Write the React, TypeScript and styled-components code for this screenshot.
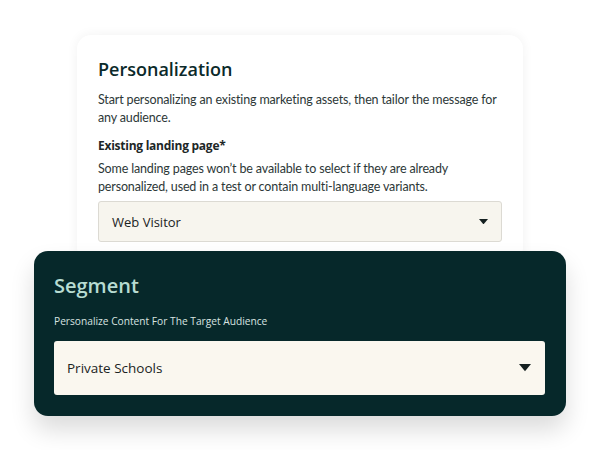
import React from "react";
import styled, { createGlobalStyle } from "styled-components";

const GlobalStyle = createGlobalStyle`
  body {
    margin: 0;
    background: #ffffff;
    font-family: "Open Sans", "Noto Sans", sans-serif;
  }
`;

const Page = styled.div`
  width: 600px;
  height: 450px;
  padding-top: 35px;
  box-sizing: border-box;
  display: flex;
  flex-direction: column;
  align-items: center;
`;

const Card = styled.div`
  width: 446px;
  box-sizing: border-box;
  padding: 22px 21px 20px;
  background: #ffffff;
  border-radius: 14px;
  box-shadow: 0 0 12px rgba(0, 0, 0, 0.06);
`;

const Title = styled.h2`
  margin: 0;
  font-size: 18px;
  font-weight: 600;
  color: #0b2a2a;
  line-height: 24px;
`;

const Text = styled.p<{ $tight?: boolean }>`
  margin: ${(p) => (p.$tight ? "5px 0 0" : "10px 0 0")};
  font-family: "Lato", "Open Sans", sans-serif;
  font-size: 12.5px;
  letter-spacing: -0.15px;
  line-height: 18px;
  color: #2d3838;
`;

const Label = styled.div`
  margin-top: 10px;
  font-size: 12px;
  font-weight: 700;
  letter-spacing: -0.25px;
  color: #1d2727;
  line-height: 18px;
`;

const Select = styled.div<{ $dark?: boolean }>`
  display: flex;
  align-items: center;
  justify-content: space-between;
  box-sizing: border-box;
  height: ${(p) => (p.$dark ? "54px" : "41px")};
  margin-top: ${(p) => (p.$dark ? "0" : "5px")};
  padding: ${(p) => (p.$dark ? "0 14px 0 13px" : "0 13px")};
  background: ${(p) => (p.$dark ? "#faf7ef" : "#f7f5ee")};
  border: ${(p) => (p.$dark ? "none" : "1px solid #dcdad3")};
  border-radius: 3px;
  font-size: ${(p) => (p.$dark ? "13.5px" : "13px")};
  font-weight: 500;
  color: #1b2323;
`;

const Caret = styled.svg`
  display: block;
`;

const Panel = styled.div`
  width: 532px;
  box-sizing: border-box;
  margin-top: -11px;
  padding: 21px 21px 21px 20px;
  background: #06282a;
  border-radius: 14px;
  box-shadow: 0 14px 24px rgba(0, 0, 0, 0.14);
  position: relative;
`;

const PanelTitle = styled.h2`
  margin: 0;
  font-size: 20px;
  font-weight: 600;
  color: #b7dcd2;
  line-height: 28px;
`;

const PanelText = styled.div`
  margin: 14px 0 13px;
  font-size: 10.2px;
  line-height: 14px;
  color: #d8e3e0;
`;

function Arrow({ size }: { size: number }) {
  return (
    <Caret width={size} height={size * 0.6} viewBox="0 0 10 6">
      <path d="M0 0 H10 L5 6 Z" fill="#152020" />
    </Caret>
  );
}

export default function App() {
  return (
    <>
      <GlobalStyle />
      <Page>
        <Card>
          <Title>Personalization</Title>
          <Text>
            Start personalizing an existing marketing assets, then tailor the
            message for any audience.
          </Text>
          <Label>Existing landing page*</Label>
          <Text $tight>
            Some landing pages won’t be available to select if they are already
            personalized, used in a test or contain multi-language variants.
          </Text>
          <Select>
            Web Visitor
            <Arrow size={9} />
          </Select>
        </Card>
        <Panel>
          <PanelTitle>Segment</PanelTitle>
          <PanelText>Personalize Content For The Target Audience</PanelText>
          <Select $dark>
            Private Schools
            <Arrow size={12} />
          </Select>
        </Panel>
      </Page>
    </>
  );
}
